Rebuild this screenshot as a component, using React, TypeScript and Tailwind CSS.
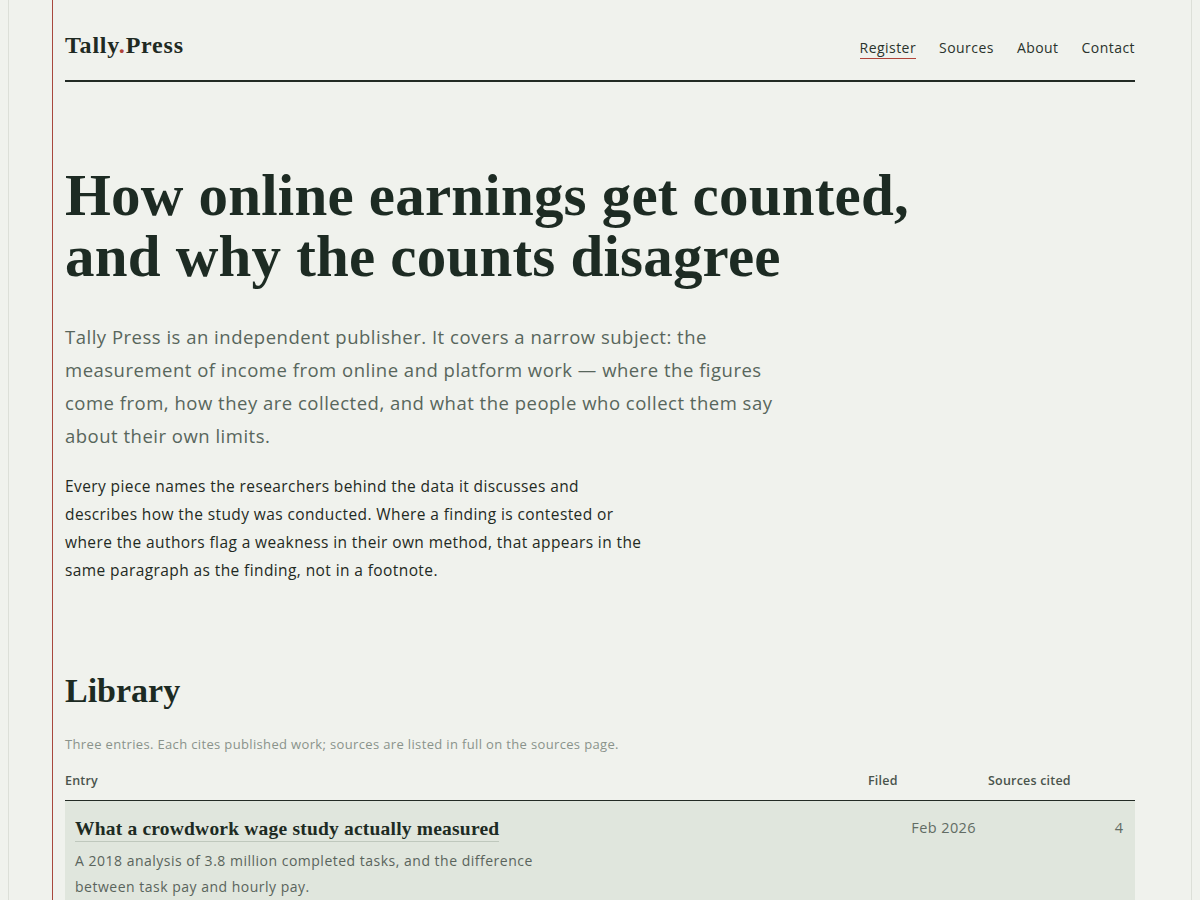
const serif = "font-['Liberation_Serif','DejaVu_Serif',serif]";

const nav = [
  { label: "Register", active: true },
  { label: "Sources" },
  { label: "About" },
  { label: "Contact" },
];

const entries = [
  {
    title: "What a crowdwork wage study actually measured",
    summary:
      "A 2018 analysis of 3.8 million completed tasks, and the difference between task pay and hourly pay.",
    filed: "Feb 2026",
    sources: 4,
  },
];

export default function App() {
  return (
    <div className="min-h-screen bg-[#f0f2ed] font-['Open_Sans','Lato',sans-serif] text-[#1d2b23]">
      <div className="mx-2 min-h-screen border-x border-[#dcdfd8]">
        <div className="mx-auto min-h-screen max-w-[1096px] border-l border-[#a8483d] pl-3 pr-[13px]">
          <header className="flex items-baseline justify-between border-b-2 border-[#232b25] pb-[19px] pt-[29px]">
            <a className={`${serif} text-[24px] font-bold leading-8 tracking-[0.8px] text-[#1f2a23]`}>
              Tally<span className="text-[#b0443a]">.</span>Press
            </a>
            <nav className="flex items-baseline gap-[23px] text-[14px] tracking-[0.45px] text-[#2a332c]">
              {nav.map((n) => (
                <a
                  key={n.label}
                  className={
                    n.active
                      ? "border-b border-[#b0443a] leading-5"
                      : "border-b border-transparent leading-5"
                  }
                >
                  {n.label}
                </a>
              ))}
            </nav>
          </header>

          <main>
            <h1 className={`${serif} mt-[83px] text-[59px] font-bold leading-[61px] tracking-[0.2px] text-[#1d2b23]`}>
              How online earnings get counted,
              <br />
              and why the counts disagree
            </h1>

            <p className="mt-[33px] max-w-[720px] text-[18.5px] leading-[33px] tracking-[0.5px] text-[#58665c]">
              Tally Press is an independent publisher. It covers a narrow subject: the measurement of
              income from online and platform work — where the figures come from, how they are
              collected, and what the people who collect them say about their own limits.
            </p>

            <p className="mt-5 max-w-[590px] text-[15.5px] leading-[28px] tracking-[0.4px] text-[#1f2a23]">
              Every piece names the researchers behind the data it discusses and describes how the
              study was conducted. Where a finding is contested or where the authors flag a weakness
              in their own method, that appears in the same paragraph as the finding, not in a
              footnote.
            </p>

            <section className="mt-[87px]">
              <h2 className={`${serif} text-[34px] font-bold leading-10 text-[#1d2b23]`}>Library</h2>
              <p className="mt-[23px] text-[13px] leading-5 tracking-[0.35px] text-[#8a938b]">
                Three entries. Each cites published work; sources are listed in full on the sources
                page.
              </p>

              <div className="mt-[17px] grid grid-cols-[1fr_120px_147px] border-b border-[#232b25] pb-[9px] text-[12.5px] font-semibold leading-5 tracking-[0.2px] text-[#4a544c]">
                <div>Entry</div>
                <div>Filed</div>
                <div>Sources cited</div>
              </div>

              {entries.map((e) => (
                <div
                  key={e.title}
                  className="grid grid-cols-[1fr_120px_147px] bg-[#e0e6dd] pb-4 pt-4"
                >
                  <div className="px-[10px]">
                    <a
                      className={`${serif} inline-block border-b border-[#bfc8bd] text-[19.5px] font-bold leading-[24px] tracking-[0.2px] text-[#1d2b23]`}
                    >
                      {e.title}
                    </a>
                    <p className="mt-[6px] max-w-[480px] text-[14px] leading-[26px] tracking-[0.5px] text-[#5a645c]">
                      {e.summary}
                    </p>
                  </div>
                  <div className="px-3 pt-[1px] text-right text-[14.5px] leading-5 tracking-[0.4px] text-[#626c64]">
                    {e.filed}
                  </div>
                  <div className="px-3 pt-[1px] text-right text-[14.5px] leading-5 text-[#626c64]">
                    {e.sources}
                  </div>
                </div>
              ))}
            </section>
          </main>
        </div>
      </div>
    </div>
  );
}
